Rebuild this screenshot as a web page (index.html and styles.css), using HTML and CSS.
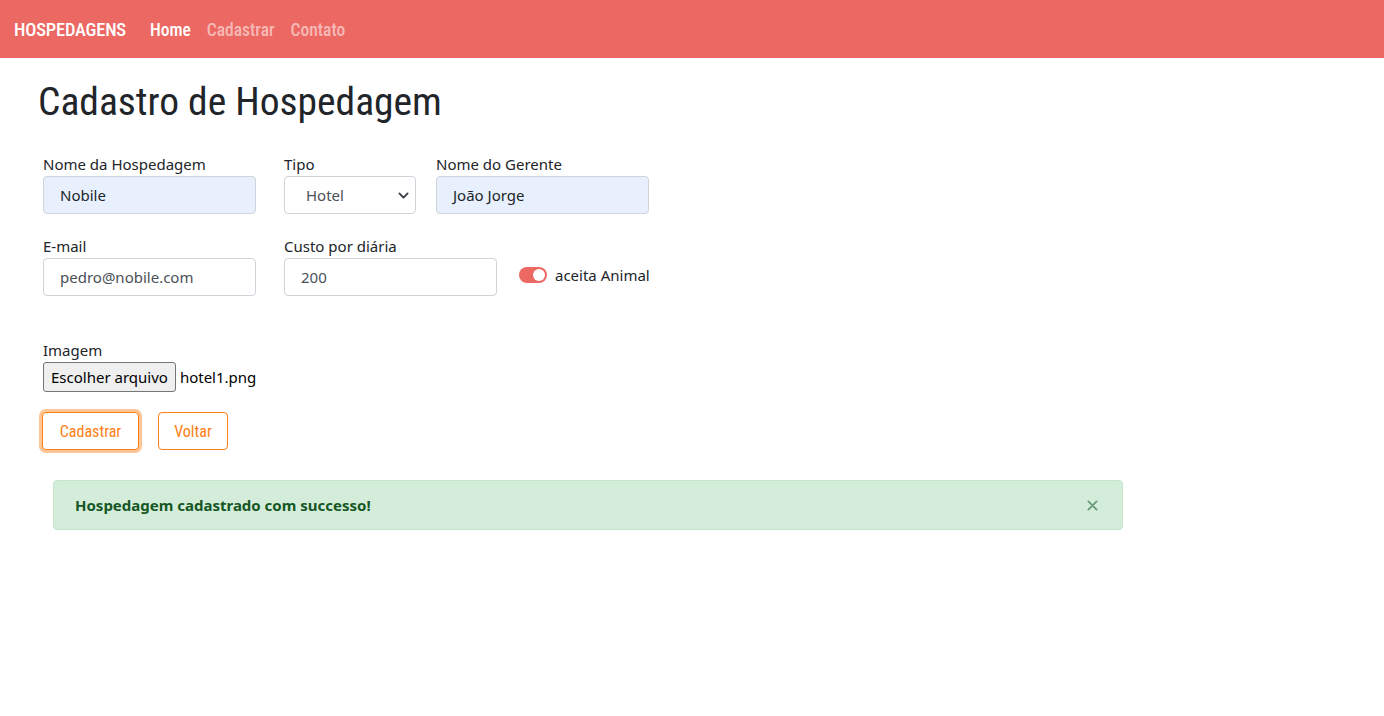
FILE: index.html
```html
<!DOCTYPE html>
<html lang="pt-BR">
<head>
<meta charset="utf-8">
<title>Cadastro de Hospedagem</title>
<link rel="stylesheet" href="styles.css">
</head>
<body>
<nav class="navbar">
  <span class="brand">HOSPEDAGENS</span>
  <a class="nav-link active" href="#">Home</a>
  <a class="nav-link" href="#">Cadastrar</a>
  <a class="nav-link" href="#">Contato</a>
</nav>
<main class="container">
  <h1 class="title">Cadastro de Hospedagem</h1>
  <form class="form">
    <div class="row">
      <div class="field w213">
        <label>Nome da Hospedagem</label>
        <div class="input autofill">Nobile</div>
      </div>
      <div class="field w132 gap28">
        <label>Tipo</label>
        <div class="input select">Hotel
          <svg class="chev" width="11" height="11" viewBox="0 0 16 16"><path d="M2 5l6 6 6-6" fill="none" stroke="#343a40" stroke-width="2.6" stroke-linecap="round" stroke-linejoin="round"/></svg>
        </div>
      </div>
      <div class="field w213 gap20">
        <label>Nome do Gerente</label>
        <div class="input autofill">João Jorge</div>
      </div>
    </div>
    <div class="row row2">
      <div class="field w213">
        <label>E-mail</label>
        <div class="input muted">pedro@nobile.com</div>
      </div>
      <div class="field w213 gap28">
        <label>Custo por diária</label>
        <div class="input muted">200</div>
      </div>
      <div class="switch-wrap">
        <span class="switch"><span class="knob"></span></span>
        <span class="switch-label">aceita Animal</span>
      </div>
    </div>
    <div class="file-field">
      <label>Imagem</label>
      <div class="file-row">
        <span class="file-btn">Escolher arquivo</span>
        <span class="file-name">hotel1.png</span>
      </div>
    </div>
    <div class="buttons">
      <button type="button" class="btn focus">Cadastrar</button>
      <button type="button" class="btn">Voltar</button>
    </div>
  </form>
  <div class="alert">
    <strong>Hospedagem cadastrado com successo!</strong>
    <span class="close">
      <svg width="11" height="11" viewBox="0 0 16 16"><path d="M2 2l12 12M14 2L2 14" stroke="#6a9a7a" stroke-width="2.6" stroke-linecap="round"/></svg>
    </span>
  </div>
</main>
</body>
</html>
```
FILE: styles.css
```css
* { box-sizing: border-box; }
body {
  margin: 0;
  font-family: "Noto Sans", "Open Sans", sans-serif;
  font-size: 15px;
  color: #212529;
  background: #fff;
}
.navbar {
  height: 58px;
  background: #ec6863;
  display: flex;
  align-items: center;
  padding-left: 14px;
  padding-top: 2px;
}
.brand, .nav-link, .title, .btn {
  font-family: Roboto, sans-serif;
  font-stretch: condensed;
}
.brand {
  color: #fff;
  font-size: 18.5px;
  font-weight: 500;
  margin-right: 24px;
  letter-spacing: -0.2px;
}
.nav-link {
  color: rgba(255,255,255,0.55);
  text-decoration: none;
  font-size: 17.5px;
  font-weight: 500;
  margin-right: 16px;
}
.nav-link.active { color: #fff; }
.container {
  padding-left: 38px;
  padding-top: 22px;
}
.title {
  margin: 0 0 30px;
  font-size: 39.5px;
  font-weight: normal;
  line-height: 44px;
  color: #212529;
}
.form { padding-left: 5px; }
.row { display: flex; align-items: flex-start; }
.row2 { margin-top: 22px; }
.field label {
  display: block;
  line-height: 20px;
  margin-bottom: 2px;
}
.w213 { width: 213px; }
.w132 { width: 132px; }
.gap28 { margin-left: 28px; }
.gap20 { margin-left: 20px; }
.input {
  height: 38px;
  border: 1px solid #ced4da;
  border-radius: 4px;
  padding: 0 16px;
  display: flex;
  align-items: center;
  font-size: 15px;
  color: #212529;
  background: #fff;
}
.autofill { background: #e8f0fe; }
.muted { color: #495057; }
.select { justify-content: space-between; padding: 0 6px 0 21px; color: #495057; }
.chev { margin-top: 1px; }
.switch-wrap {
  display: flex;
  align-items: center;
  margin-left: 22px;
  margin-top: 29px;
}
.switch {
  width: 28px;
  height: 16px;
  border-radius: 8px;
  background: #ec6863;
  position: relative;
  margin-right: 8px;
}
.knob {
  position: absolute;
  right: 2px;
  top: 2px;
  width: 12px;
  height: 12px;
  border-radius: 50%;
  background: #fff;
}
.switch-label { font-size: 15px; }
.file-field { margin-top: 45px; }
.file-field label { display: block; line-height: 18px; }
.file-row { display: flex; align-items: center; margin-top: 3px; }
.file-btn {
  height: 30px;
  border: 1px solid #767676;
  border-radius: 3px;
  background: #efefef;
  padding: 0 7px;
  display: flex;
  align-items: center;
  font-size: 15px;
  color: #000;
  margin-right: 4px;
}
.file-name { font-size: 15px; color: #000; }
.buttons { display: flex; margin-top: 20px; }
.btn {
  height: 38px;
  background: #fff;
  border: 1px solid #fd7e14;
  color: #fd7e14;
  border-radius: 4px;
  font-size: 16px;
  padding: 0 16px;
  margin-right: 19px;
  cursor: pointer;
}
.btn.focus {
  width: 97px;
  margin-left: -1px;
  box-shadow: 0 0 0 3px rgba(253,160,80,0.6);
}
.btn + .btn { width: 70px; padding: 0; }
.alert {
  margin: 30px 0 0 15px;
  width: 1070px;
  height: 50px;
  background: #d4edda;
  border: 1px solid #c3e6cb;
  border-radius: 4px;
  color: #155724;
  display: flex;
  align-items: center;
  justify-content: space-between;
  padding: 0 24px 0 21px;
  font-size: 15px;
}
.close { display: flex; }
```
